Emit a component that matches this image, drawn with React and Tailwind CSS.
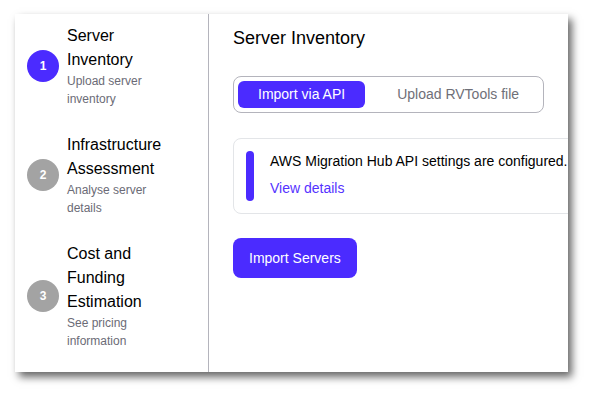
const steps = [
  { n: 1, title: "Server Inventory", sub: "Upload server inventory", active: true },
  { n: 2, title: "Infrastructure Assessment", sub: "Analyse server details" },
  { n: 3, title: "Cost and Funding Estimation", sub: "See pricing information" },
];

function Step({ n, title, sub, active }) {
  return (
    <div className="flex items-center gap-2">
      <span className={`flex h-8 w-8 shrink-0 items-center justify-center rounded-full text-[12px] font-bold text-white ${active ? "bg-[#4b2bff]" : "bg-[#a3a3a3]"}`}>
        {n}
      </span>
      <div className="w-[106px]">
        <div className="text-[16px] leading-6 text-black">{title}</div>
        <div className="text-[12px] leading-[18px] text-[#6b6b76]">{sub}</div>
      </div>
    </div>
  );
}

export default function App() {
  return (
    <div className="h-[398px] w-[593px] bg-white pl-[15px] pt-[14px] font-['Liberation_Sans',Arial,sans-serif]">
      <div className="flex h-[358px] w-[553px] overflow-hidden bg-white shadow-[4px_5px_8px_rgba(0,0,0,0.6)]">
        <aside className="flex w-[194px] shrink-0 flex-col gap-[25px] border-r border-[#b4b4bc] pl-3 pt-[10px]">
          {steps.map((s) => <Step key={s.n} {...s} />)}
        </aside>
        <main className="min-w-0 flex-1 pl-6 pt-[10px]">
          <h1 className="text-[18px] leading-7 text-black">Server Inventory</h1>
          <div className="mt-6 flex w-[311px] items-center gap-3 rounded-lg border border-[#b4b4bc] p-1">
            <button className="h-[27px] whitespace-nowrap rounded-md bg-[#4b2bff] px-5 text-[14px] text-white">Import via API</button>
            <button className="h-[27px] whitespace-nowrap px-5 text-[14px] text-[#6f6f78]">Upload RVTools file</button>
          </div>
          <div className="mt-[25px] flex w-[420px] gap-4 rounded-lg border border-[#e3e5e8] p-3">
            <span className="h-[50px] w-2 shrink-0 rounded-full bg-[#4b2bff]" />
            <div>
              <p className="whitespace-nowrap text-[14px] leading-5 text-black">AWS Migration Hub API settings are configured.</p>
              <a className="mt-[7px] block text-[14px] leading-5 text-[#5533ff]">View details</a>
            </div>
          </div>
          <button className="mt-6 h-10 rounded-lg bg-[#4b2bff] px-4 text-[14px] text-white">Import Servers</button>
        </main>
      </div>
    </div>
  );
}
